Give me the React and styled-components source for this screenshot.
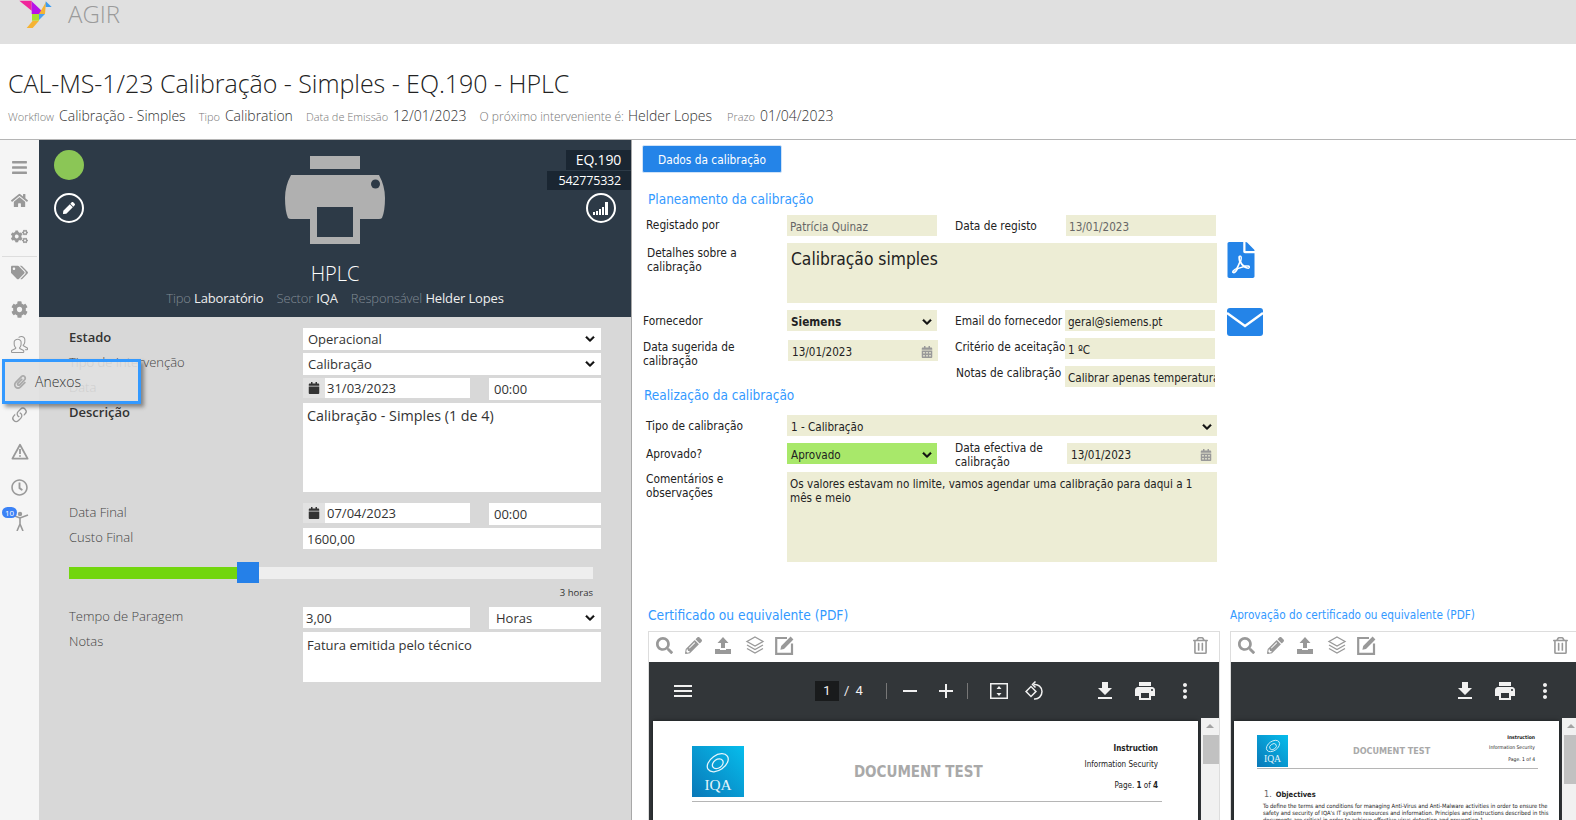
import styled, { createGlobalStyle } from 'styled-components'
import {
  FaBars, FaHome, FaCogs, FaTags, FaCog, FaPaperclip, FaRegClock,
  FaPen, FaSearch, FaPencilAlt, FaRegTrashAlt, FaCalendar, FaCalendarAlt, FaFilePdf, FaChevronDown,
} from 'react-icons/fa'
import { BsLink45Deg } from 'react-icons/bs'
import { SlPeople } from 'react-icons/sl'
import { MdMenu, MdRemove, MdAdd, MdFileDownload, MdPrint, MdMoreVert } from 'react-icons/md'

const GlobalStyle = createGlobalStyle`
  * { box-sizing: border-box; }
  html, body { margin: 0; height: 820px; overflow: hidden; background: #fff; }
  body { font-family: "Open Sans", "Liberation Sans", sans-serif; color: #333; }
`

const condensed = `"DejaVu Sans Condensed", "DejaVu Sans", sans-serif`

const Page = styled.div`
  position: relative;
  width: 1576px;
  height: 820px;
  overflow: hidden;
`

const TopBar = styled.header`
  height: 44px;
  background: #e0e0e0;
  display: flex;
  align-items: flex-start;
  padding-left: 19px;
`

const Brand = styled.span`
  margin: 0 0 0 15px;
  font-size: 24px;
  font-weight: 300;
  line-height: 27px;
  color: #9a9a9a;
`

const TitleBlock = styled.div`
  height: 96px;
  padding: 22px 0 0 8px;
  border-bottom: 1px solid #b5b5b5;
`

const Title = styled.h1`
  margin: 0;
  font-size: 25px;
  font-weight: 300;
  line-height: 34px;
  letter-spacing: -0.04px;
  color: #222;
`

const Meta = styled.div`
  display: flex;
  align-items: baseline;
  margin-top: 5px;
  line-height: 22px;
  white-space: nowrap;
`

const MetaKey = styled.span`
  font-size: ${p => p.$size || 11}px;
  font-weight: 300;
  color: #777;
  margin-left: ${p => p.$ml || 0}px;
`

const MetaValue = styled.span`
  font-size: 14px;
  font-weight: 300;
  color: #333;
  margin-left: ${p => p.$ml || 5}px;
`

const Main = styled.div`
  display: flex;
  height: 680px;
`

const Sidebar = styled.nav`
  width: 39px;
  flex: none;
  background: #f5f5f5;
  padding-top: 17px;
  display: flex;
  flex-direction: column;
  align-items: center;
`

const SideIcon = styled.div`
  position: relative;
  height: 20px;
  width: 39px;
  margin-top: ${p => p.$mt}px;
  display: flex;
  align-items: center;
  justify-content: center;
  color: #999;
  font-size: ${p => p.$size || 17}px;
`

const SideDivider = styled.hr`
  width: 35px;
  margin: 10px 0 5px;
  border: 0;
  border-top: 1px solid #ddd;
`

const Badge = styled.span`
  position: absolute;
  left: 2px;
  top: -4px;
  width: 15px;
  height: 11px;
  border-radius: 6px;
  background: #3b82f6;
  color: #fff;
  font-size: 8px;
  line-height: 11px;
  text-align: center;
`

const LeftColumn = styled.section`
  width: 593px;
  flex: none;
  background: #d8d8d8;
  border-right: 1px solid #a8a8a8;
`

const Equipment = styled.div`
  position: relative;
  height: 177px;
  background: #2d3a47;
  display: flex;
  flex-direction: column;
  align-items: center;
  padding-top: 16px;
  color: #fff;
`

const EquipmentSide = styled.div`
  position: absolute;
  top: 10px;
  ${p => (p.$right ? 'right: 0;' : 'left: 15px;')}
  display: flex;
  flex-direction: column;
  align-items: ${p => (p.$right ? 'flex-end' : 'flex-start')};
`

const StatusDot = styled.div`
  width: 30px;
  height: 30px;
  border-radius: 50%;
  background: #8bc656;
`

const RoundButton = styled.div`
  width: 30px;
  height: 30px;
  margin: ${p => (p.$right ? 3 : 13)}px ${p => (p.$right ? 15 : 0)}px 0 0;
  border-radius: 50%;
  border: 2px solid #fff;
  display: flex;
  align-items: center;
  justify-content: center;
  font-size: 12px;
  color: #fff;
`

const Tag = styled.div`
  height: ${p => p.$h}px;
  padding: 0 10px 0 ${p => p.$pl}px;
  margin-top: ${p => p.$mt || 0}px;
  background: #1a2632;
  font-size: ${p => p.$size}px;
  line-height: ${p => p.$h}px;
  letter-spacing: -0.2px;
`

const EquipmentName = styled.div`
  margin-top: 16px;
  font-size: 20px;
  font-weight: 300;
  line-height: 28px;
`

const EquipmentInfo = styled.div`
  display: flex;
  gap: 13px;
  font-size: 13px;
  line-height: 20px;
  letter-spacing: -0.15px;
  color: #eee;
`

const Faded = styled.span`
  color: #808a94;
  font-weight: 300;
`

const Form = styled.div`
  padding: 11px 30px 0;
  display: flex;
  flex-direction: column;
`

const Row = styled.div`
  display: grid;
  grid-template-columns: 234px 298px;
  margin-top: ${p => p.$mt || 0}px;
`

const Label = styled.div`
  font-size: 13px;
  line-height: 18px;
  font-weight: ${p => (p.$bold ? 600 : 300)};
  color: ${p => (p.$bold ? '#333' : '#444')};
`

const Field = styled.div`
  height: ${p => p.$h || 22}px;
  width: ${p => (p.$w ? `${p.$w}px` : 'auto')};
  background: #fff;
  display: flex;
  align-items: ${p => (p.$area ? 'flex-start' : 'center')};
  justify-content: space-between;
  padding: ${p => (p.$area ? '3px 4px' : `0 6px 0 ${p.$pl || 5}px`)};
  font-size: ${p => p.$size || 13}px;
  font-weight: ${p => p.$weight || 400};
  line-height: 20px;
  color: #333;
`

const Chevron = styled(FaChevronDown)`
  font-size: 10px;
  color: #111;
  flex: none;
  stroke: currentColor;
  stroke-width: 30;
`

const DateRow = styled.div`
  display: flex;
  gap: 19px;
`

const DateGroup = styled.div`
  width: 167px;
  height: 20px;
  display: flex;
  background: #fff;
  font-size: 13px;
  line-height: 20px;
`

const DateAddon = styled.span`
  width: 22px;
  background: #e2e2e2;
  display: flex;
  align-items: center;
  justify-content: center;
  font-size: 12px;
  color: #333;
`

const DateText = styled.span`
  padding-left: 2px;
`

const SliderBox = styled.div`
  position: relative;
  width: 524px;
  height: 21px;
  margin-top: 13px;
  display: flex;
  align-items: center;
`

const SliderTrack = styled.div`
  width: 100%;
  height: 12px;
  background: #eee;
`

const SliderFill = styled.div`
  height: 100%;
  background: #72d60d;
`

const SliderHandle = styled.div`
  position: absolute;
  top: 0;
  width: 22px;
  height: 21px;
  background: #2580e8;
`

const SliderCaption = styled.div`
  width: 524px;
  height: 14px;
  margin: 3px 0 7px;
  text-align: right;
  font-size: 9.5px;
  line-height: 14px;
  color: #333;
`

const RightColumn = styled.section`
  flex: 1;
  min-width: 0;
  background: #fff;
  overflow: hidden;
`

const TabButton = styled.button`
  display: block;
  width: 140px;
  height: 28px;
  margin: 5px 0 0 10px;
  border: 1px solid #cfe2f7;
  border-radius: 2px;
  background: #2484e8;
  color: #fff;
  font-family: ${condensed};
  font-size: 11.8px;
  line-height: 26px;
  padding: 1px 0 0;
`

const SectionHeading = styled.h2`
  margin: ${p => p.$mt}px 0 0 ${p => p.$ml}px;
  width: ${p => (p.$w ? `${p.$w}px` : 'auto')};
  flex: none;
  font-family: ${condensed};
  font-size: ${p => p.$size || 13.5}px;
  font-weight: 400;
  line-height: 20px;
  color: #3399ff;
  white-space: nowrap;
`

const DataRow = styled.div`
  display: flex;
  align-items: flex-start;
  margin-top: ${p => p.$mt}px;
  padding-left: ${p => p.$pl || 0}px;
`

const DataLabel = styled.div`
  width: ${p => p.$w}px;
  flex: none;
  padding-left: ${p => p.$x || 0}px;
  margin-top: ${p => p.$top || 0}px;
  font-family: ${condensed};
  font-size: 11.8px;
  line-height: 14px;
  color: #222;
  white-space: ${p => (p.$nowrap ? 'nowrap' : 'normal')};
`

const DataField = styled.div`
  width: ${p => p.$w}px;
  height: ${p => p.$h || 21}px;
  flex: none;
  margin: ${p => p.$top || 0}px ${p => p.$gap || 0}px 0 0;
  background: ${p => p.$bg || '#ededd5'};
  display: flex;
  align-items: ${p => (p.$pt ? 'flex-start' : 'center')};
  justify-content: space-between;
  padding: ${p => p.$pt || 2}px 5px 0 ${p => p.$pl || 3}px;
  font-family: ${condensed};
  font-size: ${p => p.$size || 11.6}px;
  font-weight: ${p => (p.$bold ? 700 : 400)};
  line-height: ${p => p.$lh || 14}px;
  color: ${p => p.$color || '#222'};
  white-space: ${p => (p.$pt ? 'normal' : 'nowrap')};
  overflow: hidden;
`

const MutedCalendar = styled(FaCalendarAlt)`
  font-size: 12px;
  color: #999;
  flex: none;
`

const PdfIcon = styled(FaFilePdf)`
  width: 28px;
  height: 36px;
  margin: -1px 0 0 10px;
  color: #2484e8;
`

const MailIcon = styled.svg`
  width: 36px;
  height: 28px;
  margin: -2px 0 0 12px;
`

const HeadingRow = styled.div`
  display: flex;
  margin-top: 43px;
`

const ViewerRow = styled.div`
  display: flex;
  gap: 10px;
  margin: 6px 0 0 16px;
`

const Viewer = styled.div`
  width: ${p => p.$w}px;
  flex: none;
  height: 200px;
  border: 1px solid #ddd;
  border-bottom: 0;
  overflow: hidden;
`

const ViewerTools = styled.div`
  height: 30px;
  display: flex;
  align-items: center;
  padding: 0 10px 4px 7px;
  color: #999;
  font-size: 17px;
`

const ToolIcon = styled.span`
  display: flex;
  margin-left: ${p => p.$ml || 0}px;
`

const TrashIcon = styled(ToolIcon)`
  margin-left: auto;
`

const PdfBar = styled.div`
  height: 59px;
  padding-bottom: 2px;
  background: #323639;
  color: #f1f1f1;
  display: flex;
  align-items: center;
  font-family: "Roboto", sans-serif;
  font-size: 24px;
`

const BarIcon = styled.span`
  display: flex;
  margin-left: ${p => p.$ml || 0}px;
  font-size: 24px;
`

const PageBox = styled.span`
  width: 24px;
  height: 20px;
  margin-left: ${p => p.$ml}px;
  background: #191b1c;
  font-size: 13px;
  line-height: 20px;
  text-align: center;
`

const PageCount = styled.span`
  margin-left: 5px;
  font-size: 13px;
  word-spacing: 3px;
`

const BarDivider = styled.span`
  width: 1px;
  height: 16px;
  background: #777;
  margin-left: ${p => p.$ml}px;
`

const PdfBody = styled.div`
  display: flex;
  height: 110px;
  background: #323639;
  padding-left: ${p => p.$pl}px;
`

const PdfPage = styled.div`
  width: ${p => p.$w}px;
  flex: none;
  height: 200px;
  background: #fff;
  padding: ${p => p.$pt}px ${p => p.$pr}px 0 ${p => p.$pad}px;
  box-shadow: 0 0 4px rgba(0, 0, 0, 0.5);
  font-family: ${condensed};
`

const DocHead = styled.div`
  display: grid;
  grid-template-columns: ${p => p.$logo}px 1fr auto;
  align-items: center;
  border-bottom: 1px solid #b5b5b5;
  padding-bottom: ${p => p.$pb}px;
  padding-right: ${p => p.$pad}px;
`

const IqaLogo = styled.div`
  width: ${p => p.$logo}px;
  height: ${p => p.$h}px;
  background: linear-gradient(45deg, #0a78b8, #06bdec);
  color: #e6f5fb;
  display: flex;
  flex-direction: column;
  align-items: center;
  justify-content: flex-end;
  padding-bottom: ${p => p.$h * 0.1}px;
  font-family: "Liberation Serif", serif;
  font-size: ${p => p.$h * 0.3}px;
  line-height: 1;
`

const IqaSwirl = styled.svg`
  width: ${p => p.$h * 0.5}px;
  height: ${p => p.$h * 0.5}px;
  margin-bottom: ${p => p.$h * 0.02}px;
`

const DocTitle = styled.div`
  padding-left: ${p => p.$pl}px;
  text-align: center;
  font-size: ${p => p.$size}px;
  font-weight: 700;
  color: #a9a9a9;
`

const DocInfo = styled.div`
  align-self: start;
  margin-top: ${p => p.$top}px;
  display: flex;
  flex-direction: column;
  align-items: flex-end;
  gap: ${p => p.$gap}px;
  font-size: ${p => p.$size}px;
  line-height: ${p => p.$lh}px;
  color: #222;

  > :last-child {
    margin-top: ${p => p.$last}px;
  }
`

const DocStrong = styled.b`
  font-weight: 700;
`

const DocSection = styled.div`
  margin: 20px 0 0 7px;
  font-size: 7.5px;
  line-height: 10px;
  font-weight: 700;
  color: #222;
`

const DocNumber = styled.span`
  font-size: 9px;
  font-weight: 400;
  color: #666;
  margin-right: 4px;
`

const DocText = styled.p`
  margin: 3px 0 0 6px;
  font-size: 5.8px;
  line-height: 7px;
  color: #222;
  white-space: nowrap;
`

const PdfScroll = styled.div`
  position: relative;
  width: 20px;
  flex: none;
  margin: -3px 0 0 ${p => p.$ml}px;
  background: #f1f1f1;
  padding: 17px 2px 0;

  &::before {
    content: '';
    position: absolute;
    top: 6px;
    left: 5px;
    border: 4px solid transparent;
    border-top: 0;
    border-bottom: 4px solid #a3a3a3;
  }
`

const PdfThumb = styled.div`
  height: ${p => p.$h}px;
  background: #c1c1c1;
`

const Tooltip = styled.div`
  position: absolute;
  left: 2px;
  top: 359px;
  width: 139px;
  height: 45px;
  display: flex;
  align-items: center;
  gap: 8px;
  padding-left: 8px;
  border: 3px solid #3399ff;
  background: rgba(224, 224, 224, 0.88);
  box-shadow: 3px 3px 4px rgba(0, 0, 0, 0.4);
  font-size: 14px;
  font-weight: 300;
  color: #333;
  svg {
    color: #aaa;
    font-size: 14px;
  }
`

function Logo() {
  return (
    <svg width="34" height="30" viewBox="19 2 34 30">
      <polygon points="19.3,2.7 31.7,2.7 31.7,12.7" fill="#f0259a" />
      <polygon points="31.7,3.3 45,16 31.7,16" fill="#b711e8" />
      <polygon points="39,16 46,4 45,16" fill="#f5b333" />
      <polygon points="45.7,3.3 51.7,9 45.7,9" fill="#3b9cf0" />
      <rect x="32" y="16" width="7" height="6.7" fill="#a6e22e" />
      <polygon points="39,16 45,16 39,22" fill="#4da0ef" />
      <polygon points="26.7,30 32.7,22.7 39,22.7 32.7,30" fill="#f5b333" />
    </svg>
  )
}

function Printer() {
  return (
    <svg width="100" height="88" viewBox="0 0 100 88">
      <rect x="25" y="0" width="50" height="13" fill="#b0b0b0" />
      <path d="M6 19H94Q100 30 100 42Q100 55 97 62Q96 63 94 63H75V50H25V63H6Q4 63 3 62Q0 55 0 42Q0 30 6 19Z" fill="#b0b0b0" />
      <circle cx="90.5" cy="28" r="4.5" fill="#2d3a47" />
      <path d="M25 50H75V88H25ZM32 51V81H68V51Z" fill="#b0b0b0" fillRule="evenodd" />
    </svg>
  )
}

function SignalIcon() {
  return (
    <svg width="16" height="13" viewBox="0 0 16 13" fill="#fff">
      <rect x="0" y="10" width="2" height="3" />
      <rect x="3" y="9" width="2" height="4" />
      <rect x="6" y="7" width="2" height="6" />
      <rect x="9" y="5" width="2" height="8" />
      <rect x="12" y="0" width="3" height="13" />
    </svg>
  )
}

function WarningIcon() {
  return (
    <svg width="18" height="17" viewBox="0 0 18 17" fill="none" stroke="#999" strokeWidth="1.8">
      <path d="M9 1.8L16.6 15.6H1.4z" strokeLinejoin="round" />
      <path d="M9 6v5M9 12.2v1.6" />
    </svg>
  )
}

function UploadIcon() {
  return (
    <svg width="18" height="18" viewBox="0 0 18 18" fill="#999">
      <path d="M9 1l5.5 6H11v5H7V7H3.5z" />
      <path d="M1 13h5v1h6v-1h5v5H1z" />
    </svg>
  )
}

function LayersIcon() {
  return (
    <svg width="20" height="18" viewBox="0 0 20 18" fill="none" stroke="#999" strokeWidth="1.3">
      <path d="M10 1l8 4.5-8 4.5-8-4.5z" />
      <path d="M2 9l8 4.5L18 9" />
      <path d="M2 12.5L10 17l8-4.5" />
    </svg>
  )
}

function NoteEditIcon() {
  return (
    <svg width="19" height="19" viewBox="0 0 19 19">
      <path d="M12 2H1.2v15.8H17V7.5" fill="none" stroke="#999" strokeWidth="2.2" />
      <path d="M15.6 0.6l2.8 2.8L9 13l-3.6 0.8L6.2 10z" fill="#999" />
    </svg>
  )
}

function FitIcon() {
  return (
    <svg width="18" height="16" viewBox="0 0 18 16" fill="none" stroke="#f1f1f1">
      <rect x="0.75" y="0.75" width="16.5" height="14.5" strokeWidth="1.5" />
      <path d="M9 3l2.5 3h-5zM9 13l2.5-3h-5z" fill="#f1f1f1" stroke="none" />
    </svg>
  )
}

function RotateIcon() {
  return (
    <svg width="19" height="20" viewBox="0 0 19 20" fill="none" stroke="#f1f1f1" strokeWidth="1.5">
      <rect x="2.5" y="7" width="7" height="7" transform="rotate(45 6 10.5)" />
      <path d="M9 3.5c4 -0.5 8 2.5 8 7s-3.5 8 -8 7.5" />
      <path d="M10.5 0.5L7.5 3.5l3 3" />
    </svg>
  )
}

function Swirl({ h }) {
  return (
    <IqaSwirl $h={h} viewBox="0 0 24 24" fill="none" stroke="#e6f5fb" strokeWidth="1.2">
      <ellipse cx="12" cy="12" rx="11" ry="7" transform="rotate(-35 12 12)" />
      <ellipse cx="12" cy="13" rx="5.5" ry="4" transform="rotate(-35 12 13)" />
    </IqaSwirl>
  )
}

function ViewerTop() {
  return (
    <ViewerTools>
      <ToolIcon><FaSearch /></ToolIcon>
      <ToolIcon $ml={12}><FaPencilAlt /></ToolIcon>
      <ToolIcon $ml={12}><UploadIcon /></ToolIcon>
      <ToolIcon $ml={13}><LayersIcon /></ToolIcon>
      <ToolIcon $ml={10}><NoteEditIcon /></ToolIcon>
      <TrashIcon><FaRegTrashAlt /></TrashIcon>
    </ViewerTools>
  )
}

// the paperclip's own slot stays empty, the Anexos tooltip shows it
const sideItems = [
  { icon: <FaBars />, mt: 0 },
  { icon: <FaHome />, mt: 13 },
  { icon: <FaCogs />, mt: 16 },
  { divider: true },
  { icon: <FaTags />, mt: 0 },
  { icon: <FaCog />, mt: 17 },
  { icon: <SlPeople />, mt: 15 },
  { icon: null, mt: 17 },
  { icon: <BsLink45Deg />, mt: 14, size: 21 },
  { icon: <WarningIcon />, mt: 16 },
  { icon: <FaRegClock />, mt: 16 },
]

function App() {
  return (
    <Page>
      <GlobalStyle />
      <TopBar>
        <Logo />
        <Brand>AGIR</Brand>
      </TopBar>
      <TitleBlock>
        <Title>CAL-MS-1/23 Calibração - Simples - EQ.190 - HPLC</Title>
        <Meta>
          <MetaKey>Workflow</MetaKey>
          <MetaValue>Calibração - Simples</MetaValue>
          <MetaKey $ml={13}>Tipo</MetaKey>
          <MetaValue>Calibration</MetaValue>
          <MetaKey $ml={13}>Data de Emissão</MetaKey>
          <MetaValue>12/01/2023</MetaValue>
          <MetaKey $ml={13} $size={12}>O próximo interveniente é:</MetaKey>
          <MetaValue $ml={4}>Helder Lopes</MetaValue>
          <MetaKey $ml={15}>Prazo</MetaKey>
          <MetaValue>01/04/2023</MetaValue>
        </Meta>
      </TitleBlock>
      <Main>
        <Sidebar>
          {sideItems.map((item, i) =>
            item.divider
              ? <SideDivider key={i} />
              : <SideIcon key={i} $mt={item.mt} $size={item.size}>{item.icon}</SideIcon>
          )}
          <SideIcon $mt={14}>
            <Badge>10</Badge>
            <svg width="20" height="20" viewBox="0 0 20 20" fill="none" stroke="#999" strokeWidth="1.6">
              <circle cx="10" cy="3" r="2.2" fill="#999" stroke="none" />
              <path d="M2 4l8 3 8-3M10 7v6M10 13l-3 7M10 13l3 7" />
            </svg>
          </SideIcon>
        </Sidebar>
        <LeftColumn>
          <Equipment>
            <EquipmentSide>
              <StatusDot />
              <RoundButton><FaPen /></RoundButton>
            </EquipmentSide>
            <EquipmentSide $right>
              <Tag $h={20} $pl={10} $size={14}>EQ.190</Tag>
              <Tag $h={19} $pl={11} $mt={1} $size={12.5}>542775332</Tag>
              <RoundButton $right><SignalIcon /></RoundButton>
            </EquipmentSide>
            <Printer />
            <EquipmentName>HPLC</EquipmentName>
            <EquipmentInfo>
              <span><Faded>Tipo</Faded> Laboratório</span>
              <span><Faded>Sector</Faded> IQA</span>
              <span><Faded>Responsável</Faded> Helder Lopes</span>
            </EquipmentInfo>
          </Equipment>
          <Form>
            <Row>
              <Label $bold>Estado</Label>
              <Field $weight={500}>Operacional<Chevron /></Field>
            </Row>
            <Row $mt={3}>
              <Label>Tipo de Intervenção</Label>
              <Field>Calibração<Chevron /></Field>
            </Row>
            <Row $mt={3}>
              <Label>Data</Label>
              <DateRow>
                <DateGroup>
                  <DateAddon><FaCalendar /></DateAddon>
                  <DateText>31/03/2023</DateText>
                </DateGroup>
                <Field $w={112}>00:00</Field>
              </DateRow>
            </Row>
            <Row $mt={3}>
              <Label $bold>Descrição</Label>
              <Field $h={89} $area $weight={500} $size={14.3}>Calibração - Simples (1 de 4)</Field>
            </Row>
            <Row $mt={11}>
              <Label>Data Final</Label>
              <DateRow>
                <DateGroup>
                  <DateAddon><FaCalendar /></DateAddon>
                  <DateText>07/04/2023</DateText>
                </DateGroup>
                <Field $w={112}>00:00</Field>
              </DateRow>
            </Row>
            <Row $mt={3}>
              <Label>Custo Final</Label>
              <Field $h={21} $pl={4}>1600,00</Field>
            </Row>
            <SliderBox>
              <SliderTrack>
                <SliderFill style={{ width: 168 }} />
              </SliderTrack>
              <SliderHandle style={{ left: 168 }} />
            </SliderBox>
            <SliderCaption>3 horas</SliderCaption>
            <Row>
              <Label>Tempo de Paragem</Label>
              <DateRow>
                <Field $w={167} $h={21} $pl={3}>3,00</Field>
                <Field $w={112} $pl={7}>Horas<Chevron /></Field>
              </DateRow>
            </Row>
            <Row $mt={3}>
              <Label>Notas</Label>
              <Field $h={50} $area>Fatura emitida pelo técnico</Field>
            </Row>
          </Form>
        </LeftColumn>
        <RightColumn>
          <TabButton>Dados da calibração</TabButton>
          <SectionHeading $mt={16} $ml={16}>Planeamento da calibração</SectionHeading>
          <DataRow $mt={6}>
            <DataLabel $w={155} $x={14} $top={3}>Registado por</DataLabel>
            <DataField $w={150} $gap={18} $color="#666">Patrícia Quinaz</DataField>
            <DataLabel $w={111} $top={4}>Data de registo</DataLabel>
            <DataField $w={150} $color="#666">13/01/2023</DataField>
          </DataRow>
          <DataRow $mt={7}>
            <DataLabel $w={155} $x={15} $top={3}>Detalhes sobre a calibração</DataLabel>
            <DataField $w={430} $h={60} $pt={4} $size={17.3} $lh={24} $pl={4}>Calibração simples</DataField>
            <PdfIcon />
          </DataRow>
          <DataRow $mt={7}>
            <DataLabel $w={155} $x={11} $top={4}>Fornecedor</DataLabel>
            <DataField $w={150} $gap={18} $bold $pl={4} $size={11.7}>Siemens<Chevron /></DataField>
            <DataLabel $w={110} $top={4} $nowrap>Email do fornecedor</DataLabel>
            <DataField $w={150}>geral@siemens.pt</DataField>
            <MailIcon viewBox="0 0 36 28">
              <rect width="36" height="28" rx="3" fill="#2484e8" />
              <path d="M0 5l18 13L36 5" fill="none" stroke="#fff" strokeWidth="2.4" />
            </MailIcon>
          </DataRow>
          <DataRow $mt={2}>
            <DataLabel $w={156} $x={11} $top={2}>Data sugerida de calibração</DataLabel>
            <DataField $w={150} $gap={17} $top={2} $pl={4}>13/01/2023<MutedCalendar /></DataField>
            <DataLabel $w={110} $top={2} $nowrap>Critério de aceitação</DataLabel>
            <DataField $w={150}>1 ºC</DataField>
          </DataRow>
          <DataRow $mt={-2} $pl={324}>
            <DataLabel $w={109}>Notas de calibração</DataLabel>
            <DataField $w={150}>Calibrar apenas temperatura</DataField>
          </DataRow>
          <SectionHeading $mt={-2} $ml={12}>Realização da calibração</SectionHeading>
          <DataRow $mt={10}>
            <DataLabel $w={155} $x={14} $top={4}>Tipo de calibração</DataLabel>
            <DataField $w={430} $pl={4}>1 - Calibração<Chevron /></DataField>
          </DataRow>
          <DataRow $mt={7}>
            <DataLabel $w={155} $x={14} $top={4}>Aprovado?</DataLabel>
            <DataField $w={150} $gap={18} $bg="#a8e86a" $pl={4}>Aprovado<Chevron /></DataField>
            <DataLabel $w={112} $top={-2}>Data efectiva de calibração</DataLabel>
            <DataField $w={150} $pl={4}>13/01/2023<MutedCalendar /></DataField>
          </DataRow>
          <DataRow $mt={3}>
            <DataLabel $w={155} $x={14}>Comentários e observações</DataLabel>
            <DataField $w={430} $h={90} $pt={5}>Os valores estavam no limite, vamos agendar uma calibração para daqui a 1 mês e meio</DataField>
          </DataRow>
          <HeadingRow>
            <SectionHeading $mt={0} $ml={16} $w={582} $size={13.7}>Certificado ou equivalente (PDF)</SectionHeading>
            <SectionHeading $mt={0} $ml={0} $size={11.7}>Aprovação do certificado ou equivalente (PDF)</SectionHeading>
          </HeadingRow>
          <ViewerRow>
            <Viewer $w={572}>
              <ViewerTop />
              <PdfBar>
                <BarIcon $ml={22}><MdMenu /></BarIcon>
                <PageBox $ml={120}>1</PageBox>
                <PageCount>/ 4</PageCount>
                <BarDivider $ml={23} />
                <BarIcon $ml={11}><MdRemove /></BarIcon>
                <BarIcon $ml={12}><MdAdd /></BarIcon>
                <BarDivider $ml={9} />
                <BarIcon $ml={22}><FitIcon /></BarIcon>
                <BarIcon $ml={17}><RotateIcon /></BarIcon>
                <BarIcon $ml={49}><MdFileDownload /></BarIcon>
                <BarIcon $ml={16}><MdPrint /></BarIcon>
                <BarIcon $ml={16}><MdMoreVert /></BarIcon>
              </PdfBar>
              <PdfBody $pl={4}>
                <PdfPage $w={545} $pt={25} $pr={36} $pad={39}>
                  <DocHead $logo={52} $pb={4} $pad={4}>
                    <IqaLogo $logo={52} $h={51}>
                      <Swirl h={51} />
                      IQA
                    </IqaLogo>
                    <DocTitle $size={15} $pl={8}>DOCUMENT TEST</DocTitle>
                    <DocInfo $size={8} $lh={10} $gap={6} $top={-2} $last={5}>
                      <DocStrong>Instruction</DocStrong>
                      <span>Information Security</span>
                      <span>Page. <DocStrong>1</DocStrong> of <DocStrong>4</DocStrong></span>
                    </DocInfo>
                  </DocHead>
                </PdfPage>
                <PdfScroll $ml={3}><PdfThumb $h={29} /></PdfScroll>
              </PdfBody>
            </Viewer>
            <Viewer $w={350}>
              <ViewerTop />
              <PdfBar>
                <BarIcon $ml={222}><MdFileDownload /></BarIcon>
                <BarIcon $ml={16}><MdPrint /></BarIcon>
                <BarIcon $ml={16}><MdMoreVert /></BarIcon>
              </PdfBar>
              <PdfBody $pl={3}>
                <PdfPage $w={325} $pt={14} $pr={21} $pad={23}>
                  <DocHead $logo={31} $pb={1} $pad={3}>
                    <IqaLogo $logo={31} $h={32}>
                      <Swirl h={32} />
                      IQA
                    </IqaLogo>
                    <DocTitle $size={9} $pl={6}>DOCUMENT TEST</DocTitle>
                    <DocInfo $size={5} $lh={6} $gap={4} $top={-1} $last={2}>
                      <DocStrong>Instruction</DocStrong>
                      <span>Information Security</span>
                      <span>Page. 1 of 4</span>
                    </DocInfo>
                  </DocHead>
                  <DocSection><DocNumber>1.</DocNumber>Objectives</DocSection>
                  <DocText>
                    To define the terms and conditions for managing Anti-Virus and Anti-Malware activities in order to ensure the<br />
                    safety and security of IQA's IT system resources and information. Principles and instructions described in this<br />
                    documents are critical in order to achieve effective virus detection and prevention.1
                  </DocText>
                </PdfPage>
                <PdfScroll $ml={3}><PdfThumb $h={49} /></PdfScroll>
              </PdfBody>
            </Viewer>
          </ViewerRow>
        </RightColumn>
      </Main>
      <Tooltip><FaPaperclip />Anexos</Tooltip>
    </Page>
  )
}

export default App
